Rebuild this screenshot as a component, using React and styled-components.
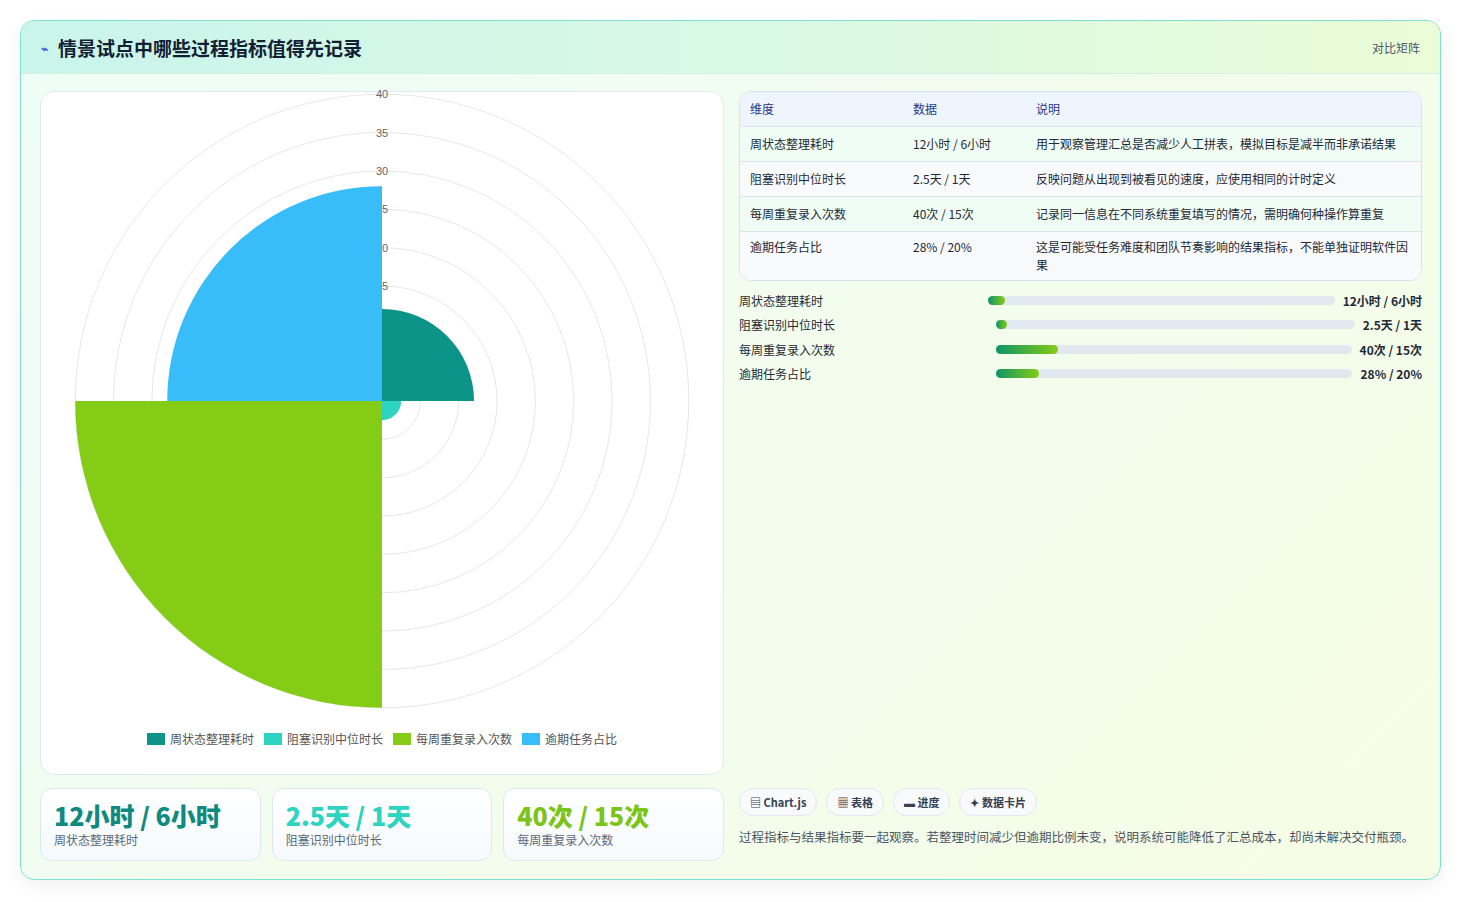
import React from "react";
import styled, { createGlobalStyle } from "styled-components";

const Global = createGlobalStyle`
  html,body{margin:0;padding:0;background:#fff;}
  body{font-family:"Noto Sans CJK SC","Noto Sans",sans-serif;}
`;
const Page = styled.div`padding:20px 21px 21px 20px;`;
const Shell = styled.div`
  border:1px solid #7fe0cf;border-radius:14px;overflow:hidden;height:860px;box-sizing:border-box;
  background:linear-gradient(135deg,#effdf8 0%,#f3fdec 60%,#f6fde6 100%);
  box-shadow:0 6px 18px rgba(0,0,0,0.06);display:flex;flex-direction:column;
`;
const Header = styled.div`
  height:55px;display:flex;align-items:center;justify-content:space-between;padding:0 20px;
  background:linear-gradient(90deg,#c9f5ec 0%,#dcf9e2 60%,#eafcd7 100%);border-bottom:1px solid #d6efe6;
`;
const Title = styled.h1`margin:0;font-size:19px;font-weight:700;color:#132033;display:flex;align-items:center;gap:10px;`;
const HeadLink = styled.span`font-size:12px;color:#4b5a6a;`;
const Body = styled.div`flex:1;display:grid;grid-template-columns:684px 1fr;gap:15px;padding:17px 18px 18px 19px;`;
const Left = styled.div`display:flex;flex-direction:column;gap:13px;`;
const ChartCard = styled.div`height:684px;box-sizing:border-box;background:#fff;border:1px solid #dfeaf0;border-radius:14px;display:flex;flex-direction:column;align-items:center;`;
const Legend = styled.div`display:flex;gap:10px;font-size:12px;color:#555;margin-top:14px;`;
const LegItem = styled.span`display:flex;align-items:center;gap:5px;&::before{content:"";width:18px;height:12px;background:${p=>p.c};}`;
const Stats = styled.div`display:grid;grid-template-columns:repeat(3,1fr);gap:11px;`;
const Stat = styled.div`height:73px;box-sizing:border-box;border:1px solid #dbe8f2;border-radius:12px;background:linear-gradient(#fff,#f6fafd);padding:10px 13px;`;
const StatVal = styled.div`font-size:25px;font-weight:800;color:${p=>p.c};line-height:32px;`;
const StatLbl = styled.div`font-size:12px;color:#5b6878;`;
const Right = styled.div`display:flex;flex-direction:column;`;
const Table = styled.div`border:1px solid #d4e3ee;border-radius:12px;overflow:hidden;background:#fff;`;
const Row = styled.div`display:grid;grid-template-columns:163px 123px 1fr;padding:0 10px;font-size:12px;color:${p=>p.h?"#1f3a8a":"#1f2937"};
  background:${p=>p.h?"#eef5fd":p.alt?"#f8fafc":"#f0fdf5"};min-height:34px;align-items:center;border-top:${p=>p.first?"none":"1px solid #dbe5ec"};padding-top:${p=>p.tall?"6px":"0"};padding-bottom:${p=>p.tall?"6px":"0"};align-items:${p=>p.tall?"start":"center"};line-height:18px;`;
const Bars = styled.div`display:flex;flex-direction:column;gap:6px;margin-top:10px;`;
const BarRow = styled.div`display:flex;align-items:center;font-size:12px;color:#1f2937;height:18.5px;`;
const BarLbl = styled.span`width:${p=>p.w}px;`;
const Track = styled.div`flex:1;height:9px;border-radius:5px;background:#e2e8f0;position:relative;`;
const Fill = styled.div`height:100%;border-radius:5px;background:linear-gradient(90deg,#0d9467,#84cc16);`;
const BarVal = styled.span`font-weight:700;margin-left:8px;`;
const Spacer = styled.div`flex:1;`;
const Chips = styled.div`display:flex;gap:9px;`;
const Chip = styled.span`font-size:11px;font-weight:600;color:#334155;border:1px solid #e2e8f0;border-radius:14px;background:#f8fafc;padding:5px 10px;`;
const Note = styled.p`margin:11px 0 14px;font-size:12.5px;color:#4b5563;line-height:20px;`;

const C = 341, R0 = 7.67;
function wedge(v, a0, a1){
  const r=v*R0, rad=a=>(a-90)*Math.PI/180;
  const x0=C+r*Math.cos(rad(a0)),y0=C+r*Math.sin(rad(a0)),x1=C+r*Math.cos(rad(a1)),y1=C+r*Math.sin(rad(a1));
  return `M${C},${C} L${x0},${y0} A${r},${r} 0 0 1 ${x1},${y1} Z`;
}
const data=[["周状态整理耗时",12,"#0d9488"],["阻塞识别中位时长",2.5,"#2dd4bf"],["每周重复录入次数",40,"#84cc16"],["逾期任务占比",28,"#38bdf8"]];

export default function App(){
  return <Page><Global/><Shell>
    <Header><Title><span style={{color:"#3b5bdb",fontSize:12}}>⌁</span>情景试点中哪些过程指标值得先记录</Title><HeadLink>对比矩阵</HeadLink></Header>
    <Body>
      <Left>
        <ChartCard>
          <svg width="682" height="640" viewBox="0 0 682 640" style={{marginTop:-16}}>
            <g transform="translate(0,-16)">
            {[1,2,3,4,5,6,7,8].map(k=><circle key={k} cx={C} cy={C} r={k*5*R0} fill="none" stroke="#e5e7eb"/>)}
            {[5,10,15,20,25,30,35,40].map(k=><text key={k} x={C} y={C-k*5*R0/5+4} textAnchor="middle" fontSize="11" fill="#666" fontFamily="Liberation Sans">{k}</text>)}
            {data.map((d,i)=><path key={i} d={wedge(d[1],i*90,i*90+90)} fill={d[2]}/>)}
            </g>
          </svg>
          <Legend>{data.map(d=><LegItem key={d[0]} c={d[2]}>{d[0]}</LegItem>)}</Legend>
        </ChartCard>
        <Stats>
          <Stat><StatVal c="#0f8a7e">12小时 / 6小时</StatVal><StatLbl>周状态整理耗时</StatLbl></Stat>
          <Stat><StatVal c="#2dd4bf">2.5天 / 1天</StatVal><StatLbl>阻塞识别中位时长</StatLbl></Stat>
          <Stat><StatVal c="#7cc41a">40次 / 15次</StatVal><StatLbl>每周重复录入次数</StatLbl></Stat>
        </Stats>
      </Left>
      <Right>
        <Table>
          <Row h first><span>维度</span><span>数据</span><span>说明</span></Row>
          <Row><span>周状态整理耗时</span><span>12小时 / 6小时</span><span>用于观察管理汇总是否减少人工拼表，模拟目标是减半而非承诺结果</span></Row>
          <Row alt><span>阻塞识别中位时长</span><span>2.5天 / 1天</span><span>反映问题从出现到被看见的速度，应使用相同的计时定义</span></Row>
          <Row><span>每周重复录入次数</span><span>40次 / 15次</span><span>记录同一信息在不同系统重复填写的情况，需明确何种操作算重复</span></Row>
          <Row alt tall><span>逾期任务占比</span><span>28% / 20%</span><span>这是可能受任务难度和团队节奏影响的结果指标，不能单独证明软件因果</span></Row>
        </Table>
        <Bars>
          <BarRow><BarLbl w={249}>周状态整理耗时</BarLbl><Track><Fill style={{width:"5%"}}/></Track><BarVal>12小时 / 6小时</BarVal></BarRow>
          <BarRow><BarLbl w={257}>阻塞识别中位时长</BarLbl><Track><Fill style={{width:"3%"}}/></Track><BarVal>2.5天 / 1天</BarVal></BarRow>
          <BarRow><BarLbl w={257}>每周重复录入次数</BarLbl><Track><Fill style={{width:"17.5%"}}/></Track><BarVal>40次 / 15次</BarVal></BarRow>
          <BarRow><BarLbl w={257}>逾期任务占比</BarLbl><Track><Fill style={{width:"12%"}}/></Track><BarVal>28% / 20%</BarVal></BarRow>
        </Bars>
        <Spacer/>
        <Chips><Chip>▤ Chart.js</Chip><Chip>▦ 表格</Chip><Chip>▬ 进度</Chip><Chip>✦ 数据卡片</Chip></Chips>
        <Note>过程指标与结果指标要一起观察。若整理时间减少但逾期比例未变，说明系统可能降低了汇总成本，却尚未解决交付瓶颈。</Note>
      </Right>
    </Body>
  </Shell></Page>;
}
